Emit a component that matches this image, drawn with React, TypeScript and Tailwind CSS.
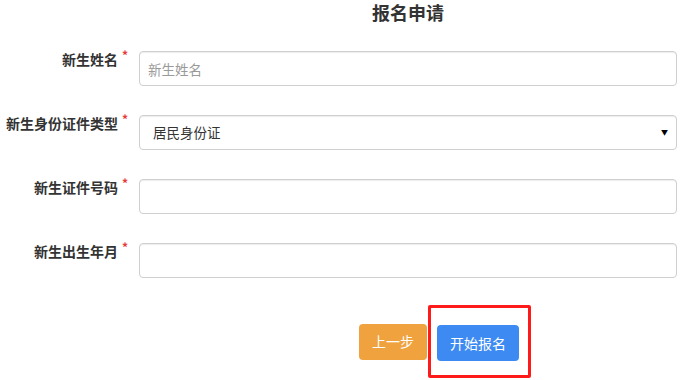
import React from 'react'

const FONT = '"Noto Sans CJK SC", "Noto Sans", sans-serif'

const FIELDS = [
  { label: '新生姓名', placeholder: '新生姓名' },
  { label: '新生身份证件类型', select: '居民身份证' },
  { label: '新生证件号码', placeholder: '' },
  { label: '新生出生年月', placeholder: '' },
] as const

export default function App() {
  return (
    <div className="h-[380px] w-[700px] overflow-hidden bg-white text-[#333]" style={{ fontFamily: FONT }}>
      {/* Title */}
      <div className="ml-[139px] w-[538px] text-center">
        <h1 className="text-[18px] font-bold leading-[24px] text-[#333]">报名申请</h1>
      </div>

      {/* Form rows */}
      <div className="mt-[27px] flex flex-col gap-[29px]">
        {FIELDS.map((f) => (
          <div key={f.label} className="flex items-start">
            <label className="-mt-[2px] flex w-[139px] shrink-0 justify-end pr-[11px] text-[14px] font-bold leading-[20px] text-[#333]">
              {f.label}
              <span className="ml-[4px] -mt-[1px] text-[12px] leading-[14px] text-[#e53935]">*</span>
            </label>
            {'select' in f ? (
              <div className="relative w-[538px]">
                <select
                  defaultValue={f.select}
                  className="h-[35px] w-full appearance-none rounded-[4px] border border-[#cfcfcf] bg-white pl-[13px] text-[13.5px] text-[#333] shadow-[inset_0_1px_1px_rgba(0,0,0,0.075)] outline-none"
                  style={{ fontFamily: FONT }}
                >
                  <option>{f.select}</option>
                </select>
                <span className="pointer-events-none absolute right-[9px] top-[14px] text-[7px] leading-[7px] text-black">▼</span>
              </div>
            ) : (
              <input
                placeholder={f.placeholder}
                className="h-[35px] w-[538px] rounded-[4px] border border-[#cfcfcf] bg-white px-[8px] text-[13.5px] text-[#333] shadow-[inset_0_1px_1px_rgba(0,0,0,0.075)] outline-none placeholder:text-[#999]"
                style={{ fontFamily: FONT }}
              />
            )}
          </div>
        ))}
      </div>

      {/* Buttons */}
      <div className="mt-[27px] flex items-center pl-[359px]">
        <button className="h-[36px] w-[68px] rounded-[4px] bg-[#f0a23e] text-[14px] text-white">上一步</button>
        <div className="ml-px rounded-[2px] border-[3px] border-[#ff1a1a] pb-[14px] pl-[6px] pr-[9px] pt-[17px]">
          <button className="h-[36px] w-[82px] rounded-[4px] bg-[#3d8bf2] text-[14px] text-white">开始报名</button>
        </div>
      </div>
    </div>
  )
}
